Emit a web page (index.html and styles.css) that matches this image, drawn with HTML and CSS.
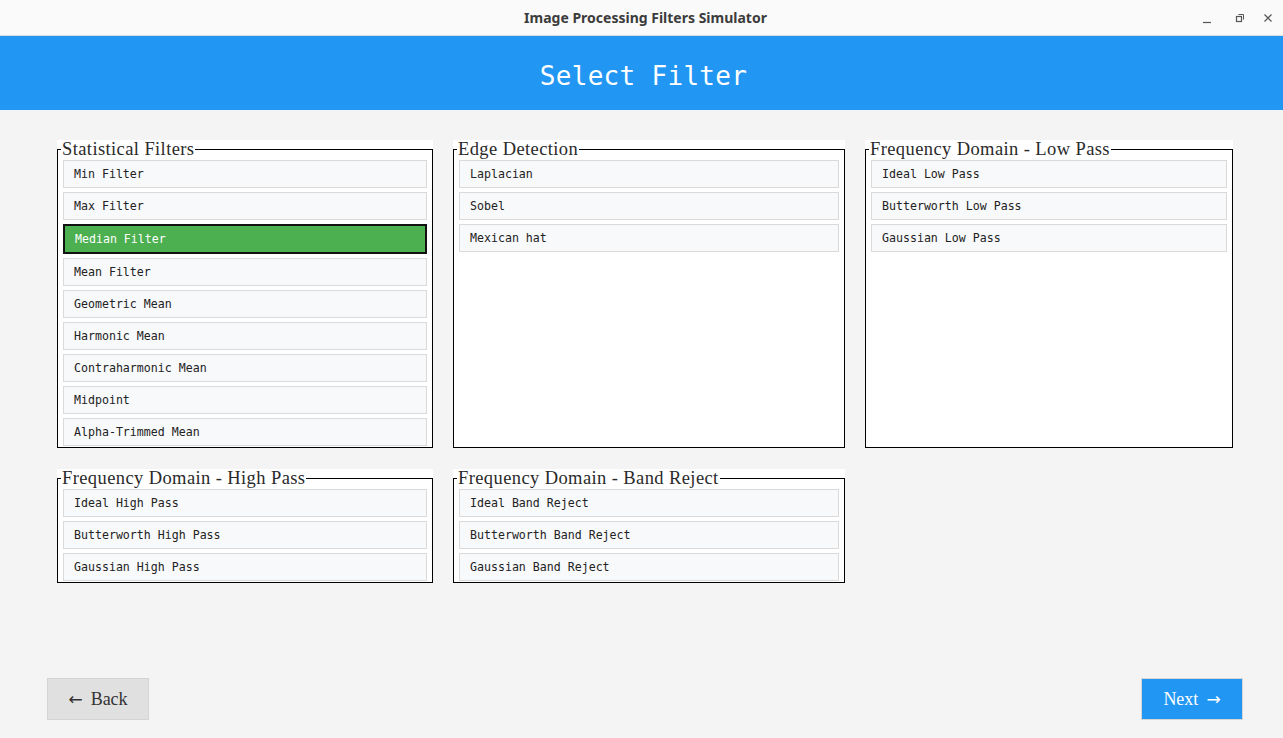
FILE: index.html
```html
<!DOCTYPE html>
<html lang="en">
<head>
<meta charset="utf-8">
<title>Image Processing Filters Simulator</title>
<link rel="stylesheet" href="styles.css">
</head>
<body>
<div class="app">
  <div class="titlebar">
    <div class="tb-spacer"></div>
    <div class="title">Image Processing Filters Simulator</div>
    <div class="controls">
      <svg class="ctl ctl-min" width="10" height="10" viewBox="0 0 10 10"><path d="M1 8.5h8" stroke="#555" stroke-width="1.2" fill="none"/></svg>
      <svg class="ctl ctl-max" width="10" height="10" viewBox="0 0 10 10"><rect x="1.5" y="3.5" width="5" height="5" stroke="#555" stroke-width="1.2" fill="none"/><path d="M3.5 1.5h5v5" stroke="#555" stroke-width="1" fill="none"/></svg>
      <svg class="ctl ctl-close" width="10" height="10" viewBox="0 0 10 10"><path d="M1.5 1.5l7 7M8.5 1.5l-7 7" stroke="#555" stroke-width="1.2" fill="none"/></svg>
    </div>
  </div>

  <header class="header">
    <h1 class="header-title">Select Filter</h1>
  </header>

  <main class="content">
    <div class="grid">
      <div class="group">
        <fieldset class="box">
          <legend class="legend">Statistical Filters</legend>
          <div class="item">Min Filter</div>
          <div class="item">Max Filter</div>
          <div class="item selected">Median Filter</div>
          <div class="item">Mean Filter</div>
          <div class="item">Geometric Mean</div>
          <div class="item">Harmonic Mean</div>
          <div class="item">Contraharmonic Mean</div>
          <div class="item">Midpoint</div>
          <div class="item">Alpha-Trimmed Mean</div>
        </fieldset>
      </div>
      <div class="group">
        <fieldset class="box">
          <legend class="legend">Edge Detection</legend>
          <div class="item">Laplacian</div>
          <div class="item">Sobel</div>
          <div class="item">Mexican hat</div>
        </fieldset>
      </div>
      <div class="group">
        <fieldset class="box">
          <legend class="legend">Frequency Domain - Low Pass</legend>
          <div class="item">Ideal Low Pass</div>
          <div class="item">Butterworth Low Pass</div>
          <div class="item">Gaussian Low Pass</div>
        </fieldset>
      </div>
      <div class="group">
        <fieldset class="box">
          <legend class="legend">Frequency Domain - High Pass</legend>
          <div class="item">Ideal High Pass</div>
          <div class="item">Butterworth High Pass</div>
          <div class="item">Gaussian High Pass</div>
        </fieldset>
      </div>
      <div class="group">
        <fieldset class="box">
          <legend class="legend">Frequency Domain - Band Reject</legend>
          <div class="item">Ideal Band Reject</div>
          <div class="item">Butterworth Band Reject</div>
          <div class="item">Gaussian Band Reject</div>
        </fieldset>
      </div>
    </div>
  </main>

  <footer class="footer">
    <button class="btn btn-back"><span class="arrow arrow-left">&larr;</span>Back</button>
    <button class="btn btn-next">Next<span class="arrow arrow-right">&rarr;</span></button>
  </footer>
</div>
</body>
</html>
```

FILE: styles.css
```css
* { box-sizing: border-box; }

html, body {
  margin: 0;
  padding: 0;
  height: 100%;
}

body {
  background: #f4f4f4;
  font-family: "DejaVu Sans Mono", monospace;
  color: #222;
}

.app {
  display: flex;
  flex-direction: column;
  height: 738px;
}

.titlebar {
  height: 36px;
  flex: none;
  background: #fafafa;
  border-bottom: 1px solid #dcdcdc;
  display: grid;
  grid-template-columns: 1fr auto 1fr;
  align-items: center;
}

.title {
  font-family: "Noto Sans", Roboto, sans-serif;
  font-weight: 700;
  font-size: 14px;
  color: #3c3c3c;
  padding-left: 8px;
}

.controls {
  justify-self: end;
  display: flex;
  align-items: center;
  padding-right: 10px;
}

.ctl { display: block; }
.ctl-min { margin-right: 23px; margin-top: 2px; }
.ctl-max { margin-right: 18px; }

.header {
  height: 74px;
  flex: none;
  background: #2196f3;
  display: flex;
  align-items: center;
  justify-content: center;
}

.header-title {
  margin: 0;
  font-family: "DejaVu Sans Mono", monospace;
  font-weight: 400;
  font-size: 26px;
  letter-spacing: 0.3px;
  color: #fff;
  padding-top: 6px;
  padding-left: 4px;
}

.content {
  flex: 1;
  padding: 30px 50px 0 57px;
}

.grid {
  display: grid;
  grid-template-columns: 376px 392px 368px;
  grid-template-rows: 308px auto;
  column-gap: 20px;
  row-gap: 21px;
}

.group {
  background: #fff;
  display: flex;
  flex-direction: column;
}

.box {
  flex: 1;
  margin: 0;
  min-width: 0;
  border: 1px solid #000;
  padding: 2px 5px 1px 5px;
}

.legend {
  font-family: "Liberation Serif", serif;
  font-size: 18.5px;
  letter-spacing: 0.4px;
  line-height: 18px;
  height: 18px;
  padding: 0 1px;
  margin-left: -2px;
  color: #2a2a2a;
}

.item {
  height: 28px;
  border: 1px solid #dadada;
  background: #f8f9fa;
  padding-left: 10px;
  font-size: 11.6px;
  line-height: 27px;
  color: #222;
  margin-bottom: 4px;
  white-space: nowrap;
}

.item:last-child { margin-bottom: 0; }

.item.selected {
  height: 30px;
  border: 2px solid #111;
  background: #4caf50;
  color: #fff;
  line-height: 27px;
}

.footer {
  flex: none;
  display: flex;
  justify-content: space-between;
  padding: 0 40px 18px 47px;
}

.btn {
  width: 102px;
  height: 42px;
  font-family: "Liberation Serif", serif;
  font-size: 18px;
  border: 1px solid #d4d4d4;
  padding: 0;
  cursor: pointer;
}

.arrow {
  font-family: "DejaVu Sans", sans-serif;
  font-size: 17px;
}

.arrow-left { margin-right: 8px; }
.arrow-right { margin-left: 8px; }

.btn-back {
  background: #e0e0e0;
  color: #333;
}

.btn-next {
  background: #2196f3;
  color: #fff;
  border-color: #d6d6d6;
}
```
